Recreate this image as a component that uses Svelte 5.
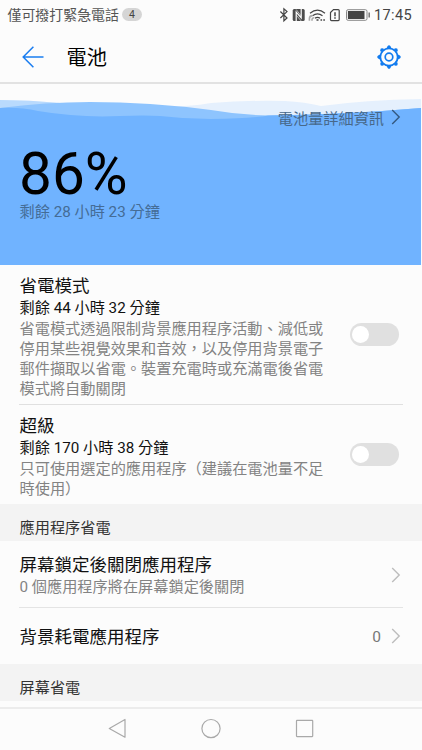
<script>
  const modes = [
    {
      title: '省電模式',
      left: '剩餘 44 小時 32 分鐘',
      lines: ['省電模式透過限制背景應用程序活動、減低或', '停用某些視覺效果和音效，以及停用背景電子', '郵件擷取以省電。裝置充電時或充滿電後省電', '模式將自動關閉']
    },
    {
      title: '超級',
      left: '剩餘 170 小時 38 分鐘',
      lines: ['只可使用選定的應用程序（建議在電池量不足', '時使用）']
    }
  ];
</script>

{#snippet chevron(color)}
  <svg class="chev" width="10" height="16" viewBox="0 0 10 16" fill="none" stroke={color} stroke-width="1.4">
    <path d="M1.2 1 8.2 8 1.2 15" />
  </svg>
{/snippet}

<div class="screen" lang="zh-Hant">
  <div class="status">
    <span class="carrier">僅可撥打緊急電話</span>
    <span class="count">4</span>
    <svg class="icons" width="94" height="16" viewBox="0 0 94 16" fill="none" stroke="#444" stroke-width="1.2">
      <path d="M1.4 4.5 8 11 4.9 13.8V1.8L8 4.6 1.4 11" />
      <rect x="13.7" y="2" width="12" height="12" rx="1.5" fill="#4c4c4c" stroke="none" />
      <path d="M17.2 14V5.2l5 5.8V2" stroke="#fcfcfc" stroke-width="1.2" />
      <path d="M17.2 2.5 22.2 9M17.2 8 22.2 14" stroke="#fcfcfc" stroke-width=".6" />
      <path d="M31 6.2q7.5-6 15 0M33.5 8.8q5-4 10 0M35.9 11.3q2.6-2 5.2 0" />
      <path d="M30.4 13.8v-2q0-3 3-3.2M33 13.8v-1.4q0-1.4 2-1.6" stroke="#aaa" stroke-width="1.6" />
      <path d="M37.5 13h2M41.5 13h1.6M44.3 13h1.6" stroke-width="1.5" />
      <path d="M51.5 5.5 54.5 2.6h4.7q1 0 1 1v9q0 1-1 1h-6.7q-1 0-1-1z" />
      <path d="M56 5.3v4M56 10.3v1.5" stroke-width="1.5" />
      <rect x="67.5" y="2.7" width="20.5" height="10.6" rx="1.6" stroke="#888" stroke-width="1" />
      <rect x="68.9" y="4" width="16.6" height="8" fill="#444" stroke="none" />
      <path d="M90.2 5.5v5" stroke="#777" stroke-width="1.5" />
    </svg>
    <span class="time">17:45</span>
  </div>

  <header>
    <svg width="22" height="22" viewBox="0 0 22 22" fill="none" stroke="#1a7df0" stroke-width="1.5">
      <path d="M21.5 11H1.2M11.4 .8 1.2 11l10.2 10.2" />
    </svg>
    <h1>電池</h1>
    <svg width="24" height="24" viewBox="-12 -12 24 24" fill="none" stroke="#117bef">
      <circle r="8.7" stroke-width="1.8" />
      <circle r="3.8" stroke-width="1.7" />
      {#each [0, 45, 90, 135, 180, 225, 270, 315] as angle}
        <path d="M-2.4-9-1.4-10.9Q0-12.6 1.4-10.9L2.4-9z" fill="#117bef" stroke="none" transform="rotate({angle})" />
      {/each}
    </svg>
  </header>

  <section class="hero">
    <svg class="wave" width="421" height="181" viewBox="0 0 421 181">
      <path d="M0 16Q25 16 60 19L120 20Q170 26 211 19Q250 16 285 17Q305 18 321 22Q365 16 421 15V40H0z" fill="#e5f0fd" />
      <path d="M0 16Q30 16 60 19Q140 22 211 35V40H0z" fill="#b9dafd" />
      <path d="M0 24Q45 18 90 18Q150 18 211 26Q240 31 268 31.5Q340 31 421 24V181H0z" fill="#8ec4fe" />
      <path d="M0 24Q20 23 38 27Q80 34 120 32Q145 31 160 32Q185 35 211 35Q255 34 268 31.5Q340 31 421 24V181H0z" fill="#70b3ff" />
    </svg>
    <div class="detail"><span>電池量詳細資訊</span>{@render chevron('#34597f')}</div>
    <div class="percent">86%</div>
    <div class="remain">剩餘 28 小時 23 分鐘</div>
  </section>

  {#each modes as mode}
    <section class="mode">
      <div class="copy">
        <h2>{mode.title}</h2>
        <div class="left">{mode.left}</div>
        {#each mode.lines as line}<div class="line">{line}</div>{/each}
      </div>
      <div class="switch"><i></i></div>
    </section>
  {/each}

  <div class="group">應用程序省電</div>
  <section class="link first">
    <div>
      <h2>屏幕鎖定後關閉應用程序</h2>
      <div class="line">0 個應用程序將在屏幕鎖定後關閉</div>
    </div>
    {@render chevron('#bdbdbd')}
  </section>
  <section class="link second">
    <h2>背景耗電應用程序</h2>
    <span class="num">0</span>
    {@render chevron('#bdbdbd')}
  </section>
  <div class="group">屏幕省電</div>

  <nav>
    <svg width="422" height="41" viewBox="0 0 422 41" fill="none" stroke="#a9a9a9" stroke-width="1.2" stroke-linejoin="round">
      <path d="M125 10.5V28.2L109.3 19.4z" />
      <circle cx="211" cy="19.6" r="9.1" />
      <rect x="296.5" y="11.4" width="16.2" height="16.2" rx=".5" />
    </svg>
  </nav>
</div>

<style>
  :global(body) { margin: 0; background: #fcfcfc; }
  .screen {
    width: 422px; height: 750px; overflow: hidden; background: #fcfcfc; color: #111;
    font-family: Roboto, "Noto Sans CJK TC", sans-serif; display: flex; flex-direction: column;
  }
  .screen > * { flex: none; box-sizing: border-box; }
  .status { height: 30px; display: flex; align-items: center; padding-left: 7.5px; color: #555; }
  .carrier { font-size: 13.95px; line-height: 20px; width: 112px; white-space: nowrap; }
  .count {
    width: 20px; height: 13px; margin-left: 2.5px; margin-top: -1px; border-radius: 7px; background: #d5d5d5;
    font-size: 10.5px; line-height: 13px; text-align: center; color: #444;
  }
  .icons { margin-left: 137px; margin-top: -1px; }
  .time { font-size: 14.5px; color: #444; margin-left: 1px; letter-spacing: .4px; }
  header { height: 54px; display: flex; align-items: center; padding: 1px 21px 0 22px; border-bottom: 2px solid #e2e2e2; }
  h1 { flex: 1; margin: 2px 0 0 22.5px; font-size: 20.2px; line-height: 28px; font-weight: 400; color: #000; }
  .hero { height: 181px; width: 421px; position: relative; display: flex; flex-direction: column; }
  .wave { position: absolute; inset: 0; }
  .detail, .percent, .remain { position: relative; }
  .detail { height: 24px; margin-top: 21px; padding-right: 20px; display: flex; align-items: center; justify-content: flex-end; gap: 7px; color: #47688a; font-size: 15.2px; }
  .percent { margin: 22px 0 0 19px; height: 46px; line-height: 46px; font-size: 58.5px; color: #000; }
  .remain { margin: 5px 0 0 19.5px; line-height: 20px; font-size: 15.2px; color: #446c96; }
  h2 { margin: 0; font-size: 17.5px; line-height: 24px; font-weight: 400; color: #111; }
  .mode { margin-left: 19px; width: 384px; display: flex; justify-content: space-between; align-items: center; padding: 9px 4px 5px .5px; }
  .mode:has(+ .mode) { border-bottom: 1px solid #e0e0e0; }
  .left { font-size: 15.2px; line-height: 20px; margin-bottom: 1px; }
  .line { font-size: 15.2px; line-height: 20px; color: #838383; white-space: nowrap; }
  .switch { width: 49px; height: 23px; margin-top: -4px; border-radius: 12px; background: #e0e0e0; display: flex; align-items: center; padding-left: 2px; box-sizing: border-box; }
  .switch i { width: 17px; height: 17px; border-radius: 50%; background: #fff; }
  .group { height: 37px; background: #f3f3f3; padding: 6px 0 0 19.5px; line-height: 36px; font-size: 15.2px; color: #333; }
  .link { margin-left: 19px; width: 384px; display: flex; align-items: center; justify-content: space-between; padding: 0 2px 0 .5px; }
  .link > div, .second h2 { padding-top: 2px; }
  .first { height: 67px; border-bottom: 1px solid #e4e4e4; }
  .second { height: 56px; }
  .num { margin: 1px 10px 0 auto; font-size: 15.5px; color: #777; }
  .first .chev { margin-top: 1px; }
  nav { margin-top: 6px; height: 43px; border-top: 2px solid #ececec; }
  nav svg { display: block; }
  .chev { flex: none; }
</style>
